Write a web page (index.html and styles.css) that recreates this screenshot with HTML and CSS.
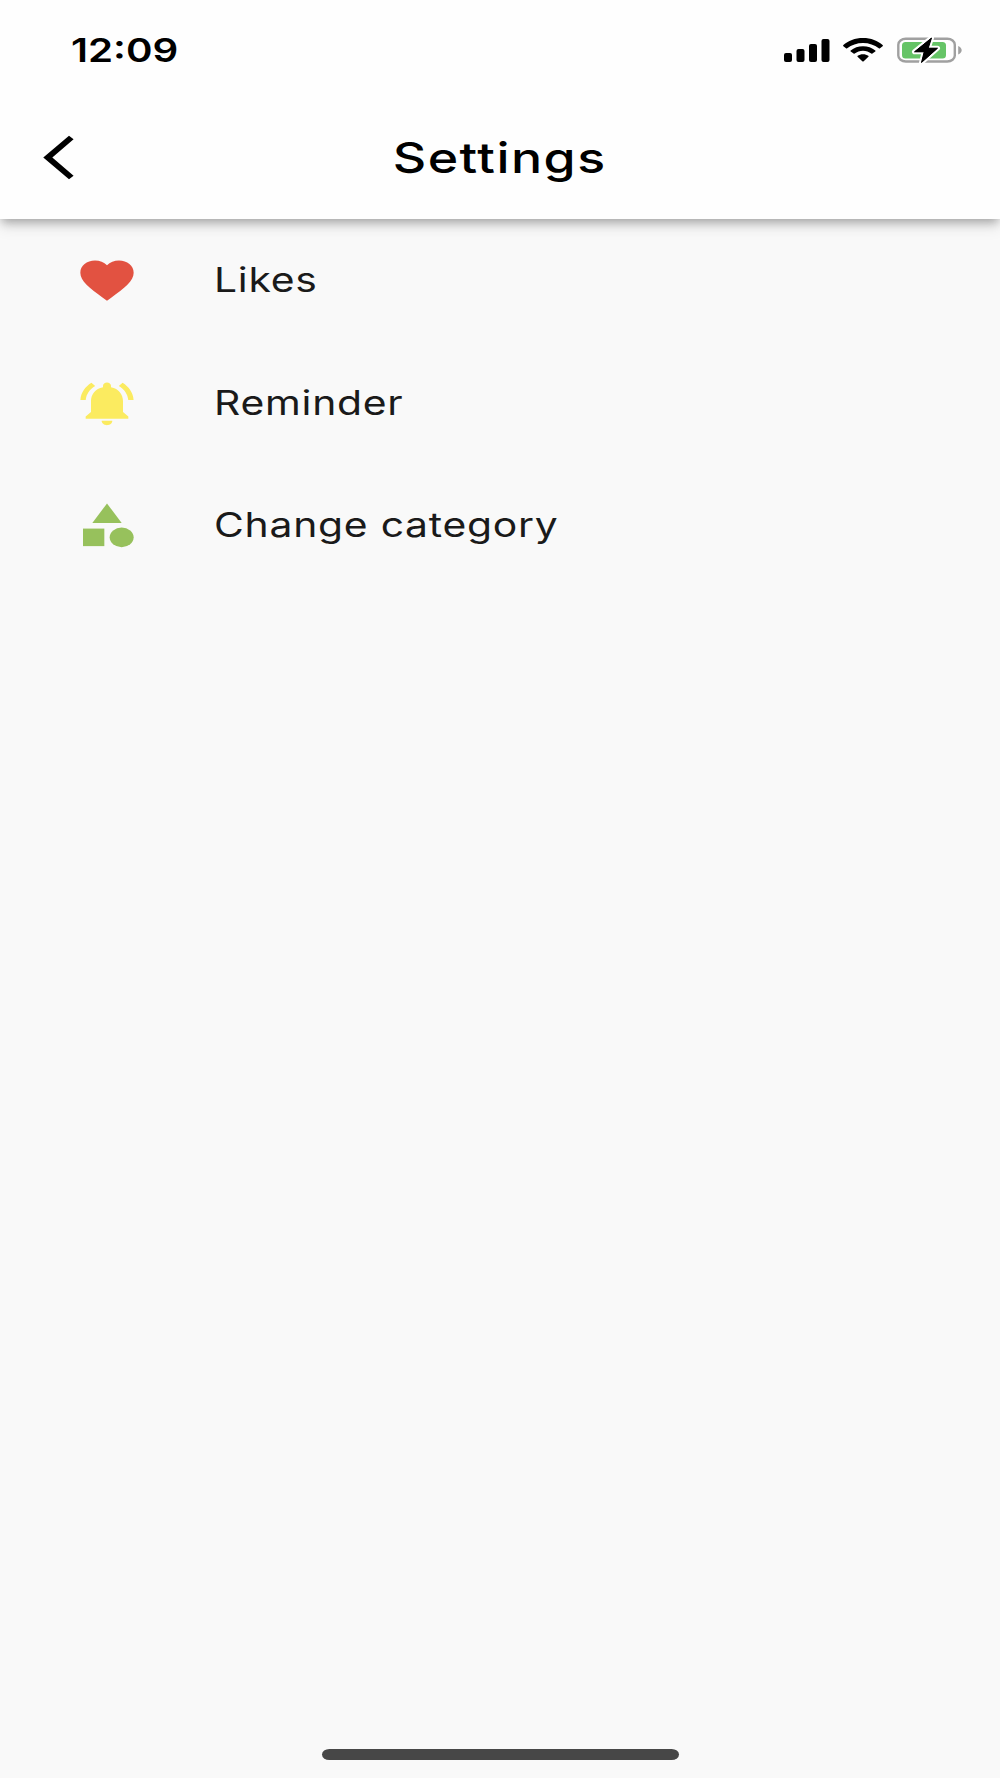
FILE: index.html
```html
<!DOCTYPE html>
<html lang="en">
<head>
    <meta charset="UTF-8">
    <meta name="viewport" content="width=device-width, initial-scale=1.0">
    <title>Settings</title>
    <link rel="stylesheet" href="styles.css">
</head>
<body>

<div class="screen">
    <header class="header">
        <div class="status-bar">
            <span class="time">12:09</span>
            <div class="status-icons">
                <svg width="46" height="24" viewBox="0 0 46 24">
                    <rect x="0" y="15" width="8" height="9" rx="2"/>
                    <rect x="12.5" y="11" width="8" height="13" rx="2"/>
                    <rect x="25" y="6" width="8" height="18" rx="2"/>
                    <rect x="37.5" y="1" width="8" height="23" rx="2"/>
                </svg>
                <svg class="wifi" width="40" height="24" viewBox="0 0 40 24">
                    <path d="M20 0C12 0 5 2.700 .4 7.100q-.6.600 0 1.100l2.600 2.100q.6.500 1.200 0C8.500 6.900 14 4.900 20 4.900s11.500 2 15.800 5.400q.6.500 1.200 0l2.600-2.100q.6-.5 0-1.100C35 2.700 28 0 20 0z"/>
                    <path d="M20 8.200c-4.700 0-9 1.600-12.300 4.200q-.6.500 0 1l2.900 2.200q.5.400 1.100 0c2.300-1.800 5.100-2.900 8.300-2.900s6 1.100 8.300 2.900q.6.400 1.100 0l2.900-2.200q.6-.5 0-1C29 9.800 24.700 8.200 20 8.200z"/>
                    <path d="M20 16.200c-2.100 0-3.900.6-5.300 1.500q-.7.500-.1 1l4.700 4.500q.7.600 1.400 0l4.700-4.500q.6-.5-.1-1c-1.400-.9-3.200-1.500-5.300-1.500z"/>
                </svg>
                <svg class="battery" width="66" height="28" viewBox="0 0 66 28">
                    <rect x="1.300" y="2.700" width="56.500" height="22.800" rx="7.500" ry="6" fill="none" stroke="#a0a0a0" stroke-width="2.400"/>
                    <rect x="5" y="6" width="44" height="16.500" rx="3.500" fill="#65c466"/>
                    <path d="M61.200 10v8.500c2-.7 3.500-2.300 3.500-4.200s-1.500-3.600-3.500-4.300z" fill="#a0a0a0"/>
                    <path d="M34.500 2L17.500 15.800h9.700L24.500 26.500l16-14.300h-9.300z" fill="#000" stroke="#fff" stroke-width="5" stroke-linejoin="round" paint-order="stroke"/>
                    <path d="M34.500 2L17.500 15.800h9.700L24.500 26.500l16-14.300h-9.300z" stroke="#000" stroke-width="1" stroke-linejoin="round"/>
                </svg>
            </div>
        </div>
        <div class="app-bar">
            <svg class="back" width="64" height="53" viewBox="0 0 24 24" preserveAspectRatio="none">
                <path d="M11.470 3.770L9.750 2.200 0.100 12l9.650 9.800 1.720-1.570L3.500 12z"/>
            </svg>
            <h1 class="title">Settings</h1>
        </div>
    </header>

    <ul class="list">
        <li class="item">
            <svg class="icon like" viewBox="0 0 24 24" preserveAspectRatio="none">
                <path d="M12 21.350l-1.450-1.320C5.400 15.360 2 12.280 2 8.500 2 5.420 4.420 3 7.500 3c1.740 0 3.410.81 4.500 2.090C13.090 3.810 14.760 3 16.500 3 19.580 3 22 5.420 22 8.500c0 3.780-3.400 6.860-8.550 11.540L12 21.350z"/>
            </svg>
            <span class="label">Likes</span>
        </li>
        <li class="item">
            <svg class="icon reminder" viewBox="0 0 24 24" preserveAspectRatio="none">
                <path d="M7.580 4.080L6.150 2.650C3.750 4.480 2.170 7.300 2.030 10.500h2c.15-2.650 1.510-4.970 3.550-6.420zm12.390 6.420h2c-.15-3.200-1.730-6.020-4.120-7.850l-1.420 1.430c2.020 1.450 3.390 3.770 3.540 6.420zM18 11c0-3.070-1.640-5.640-4.500-6.320V4c0-.83-.67-1.500-1.500-1.500s-1.500.67-1.500 1.500v.68C7.630 5.360 6 7.920 6 11v5l-2 2v1h16v-1l-2-2v-5zm-6 11c.14 0 .27-.01.4-.04.65-.14 1.180-.58 1.440-1.180.1-.24.15-.5.15-.78h-4c.01 1.100.9 2 2.010 2z"/>
            </svg>
            <span class="label">Reminder</span>
        </li>
        <li class="item">
            <svg class="icon category" viewBox="0 0 24 24" preserveAspectRatio="none">
                <path d="M12 2l-5.500 9h11z"/>
                <circle cx="17.500" cy="17.500" r="4.500"/>
                <path d="M3 13.500h8v8H3z"/>
            </svg>
            <span class="label">Change category</span>
        </li>
    </ul>

    <div class="home-bar"></div>
</div>

</body>
</html>
```
FILE: styles.css
```css
body {
    font-family: Inter, sans-serif;
    margin: 0;
    background-color: #f9f9f9;
}
.screen {
    display: flex;
    flex-direction: column;
    height: 1778px;
    overflow: hidden;
}
.header {
    height: 219px;
    background-color: #fefefe;
    box-shadow: 0 5px 9px -2px rgba(0, 0, 0, 0.28), 0 8px 14px rgba(0, 0, 0, 0.1);
}
.status-bar {
    display: flex;
    justify-content: space-between;
    height: 96px;
    padding: 0 37px 0 71px;
}
.time {
    font-size: 33px;
    font-weight: 600;
    line-height: 101px;
    transform: scaleX(1.22);
    transform-origin: left;
}
.status-icons {
    display: flex;
    align-items: flex-start;
    padding-top: 38px;
}
.wifi {
    margin-left: 13px;
}
.battery {
    margin: -2px 0 0 14px;
}
.app-bar {
    display: grid;
    grid-template-columns: 1fr auto 1fr;
    align-items: center;
    height: 123px;
    padding: 0 43px;
}
.title {
    grid-column: 2;
    margin: 0;
    font-size: 42.5px;
    font-weight: 500;
    letter-spacing: 1.2px;
    transform: scaleX(1.22);
}
.list {
    flex: 1;
    margin: 0;
    padding: 0;
    list-style: none;
}
.item {
    display: flex;
    align-items: center;
    height: 122.6px;
    padding-left: 74.7px;
}
.icon {
    width: 64px;
    height: 52.6px;
    margin-right: 75.3px;
}
.like {
    fill: #e25241;
}
.reminder {
    fill: #fbeb60;
}
.category {
    fill: #97c15c;
}
.label {
    color: #1a1a1a;
    font-size: 33.5px;
    letter-spacing: 0.6px;
    transform: scaleX(1.22);
    transform-origin: left;
}
.home-bar {
    align-self: center;
    width: 357px;
    height: 11px;
    margin-bottom: 18px;
    border-radius: 8px / 6px;
    background-color: #474747;
}
```
